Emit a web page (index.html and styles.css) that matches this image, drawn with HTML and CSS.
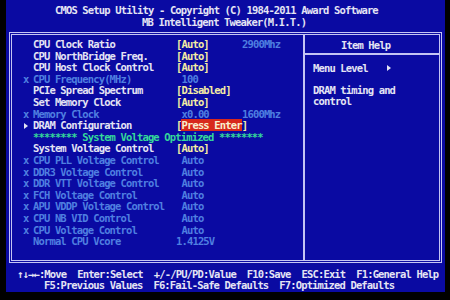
FILE: index.html
```html
<!DOCTYPE html>
<html lang="en">
<head>
    <meta charset="UTF-8">
    <title>CMOS Setup Utility - MB Intelligent Tweaker</title>
    <link rel="stylesheet" href="styles.css">
</head>
<body>
    <div class="screen">
        <header class="title">
            <div class="title-main">CMOS Setup Utility - Copyright (C) 1984-2011 Award Software</div>
            <div class="title-sub">MB Intelligent Tweaker(M.I.T.)</div>
        </header>

        <div class="frame">
            <!-- Settings list -->
            <div class="settings">
                <div class="row"><span class="mark"></span><span class="label">CPU Clock Ratio</span><span class="value">[Auto]</span><span class="extra">2900Mhz</span></div>
                <div class="row"><span class="mark"></span><span class="label">CPU NorthBridge Freq.</span><span class="value">[Auto]</span></div>
                <div class="row"><span class="mark"></span><span class="label">CPU Host Clock Control</span><span class="value">[Auto]</span></div>
                <div class="row off"><span class="mark">x</span><span class="label">CPU Frequency(MHz)</span><span class="value"> 100</span></div>
                <div class="row"><span class="mark"></span><span class="label">PCIe Spread Spectrum</span><span class="value">[Disabled]</span></div>
                <div class="row"><span class="mark"></span><span class="label">Set Memory Clock</span><span class="value">[Auto]</span></div>
                <div class="row off"><span class="mark">x</span><span class="label">Memory Clock</span><span class="value"> x0.00</span><span class="extra">1600Mhz</span></div>
                <div class="row"><span class="mark"><span class="tri"></span></span><span class="label">DRAM Configuration</span><span class="value">[<span class="selected">Press Enter</span>]</span></div>
                <div class="row section"><span class="mark"></span><span class="label">******** System Voltage Optimized ********</span></div>
                <div class="row"><span class="mark"></span><span class="label">System Voltage Control</span><span class="value">[Auto]</span></div>
                <div class="row off"><span class="mark">x</span><span class="label">CPU PLL Voltage Control</span><span class="value"> Auto</span></div>
                <div class="row off"><span class="mark">x</span><span class="label">DDR3 Voltage Control</span><span class="value"> Auto</span></div>
                <div class="row off"><span class="mark">x</span><span class="label">DDR VTT Voltage Control</span><span class="value"> Auto</span></div>
                <div class="row off"><span class="mark">x</span><span class="label">FCH Voltage Control</span><span class="value"> Auto</span></div>
                <div class="row off"><span class="mark">x</span><span class="label">APU VDDP Voltage Control</span><span class="value"> Auto</span></div>
                <div class="row off"><span class="mark">x</span><span class="label">CPU NB VID Control</span><span class="value"> Auto</span></div>
                <div class="row off"><span class="mark">x</span><span class="label">CPU Voltage Control</span><span class="value"> Auto</span></div>
                <div class="row off"><span class="mark"></span><span class="label">Normal CPU Vcore</span><span class="value">1.4125V</span></div>
            </div>

            <!-- Help panel -->
            <div class="help">
                <div class="help-title">Item Help</div>
                <div class="help-body">
                    <div class="help-level">Menu Level  <span class="tri"></span></div>
                    <div class="help-text">DRAM timing and<br>control</div>
                </div>
            </div>
        </div>

        <footer class="keys">
            <div class="keys-main">&uarr;&darr;&rarr;&larr;:Move  Enter:Select  +/-/PU/PD:Value  F10:Save  ESC:Exit  F1:General Help</div>
            <div class="keys-sub">F5:Previous Values  F6:Fail-Safe Defaults  F7:Optimized Defaults</div>
        </footer>
    </div>
</body>
</html>
```

FILE: styles.css
```css
body {
    margin: 0;
    padding: 0;
    background-color: #000;
    font-family: "DejaVu Sans Mono", "Liberation Mono", monospace;
    font-weight: bold;
    font-size: 10.5px;
    letter-spacing: -0.85px;
    color: #e4e4f4;
    width: 450px;
    height: 300px;
    overflow: hidden;
}

.screen {
    margin-left: 6px;
    width: 439px;
    height: 292px;
    background-color: #0a0aa2;
    display: flex;
    flex-direction: column;
}

.title {
    padding-top: 4px;
    height: 28px;
    flex-shrink: 0;
}

.title-main {
    line-height: 12px;
    padding-left: 49px;
    white-space: pre;
}

.title-sub {
    line-height: 12px;
    padding-left: 136px;
    white-space: pre;
}

.frame {
    margin-left: 3px;
    width: 427px;
    height: 225px;
    flex-shrink: 0;
    border: 3px double #c4c4f4;
    display: flex;
}

.settings {
    width: 291px;
    padding-top: 4px;
    border-right: 2px solid #c4c4f4;
}

.row {
    display: flex;
    height: 11.6px;
    line-height: 11.6px;
    white-space: pre;
}

.mark {
    width: 10px;
    padding-left: 11px;
    display: flex;
    align-items: center;
}

.tri {
    display: inline-block;
    width: 0;
    height: 0;
    border-top: 3px solid transparent;
    border-bottom: 3px solid transparent;
    border-left: 4px solid #e4e4f4;
    margin-left: 1px;
}

.label {
    width: 143px;
}

.value {
    width: 66px;
    color: #f4eca4;
}

.extra {
    color: #4f7fe0;
}

.off,
.off .value {
    color: #4f7fe0;
}

.section .label {
    color: #34d89a;
    width: auto;
}

.selected {
    background-color: #d8281c;
    color: #f8f0d0;
}

.help {
    flex: 1;
    display: flex;
    flex-direction: column;
}

.help-title {
    height: 14px;
    line-height: 12px;
    padding-top: 4px;
    padding-left: 36px;
    border-bottom: 2px solid #c4c4f4;
}

.help-body {
    padding-left: 8px;
    padding-top: 8px;
}

.help-level {
    line-height: 11px;
    white-space: pre;
}

.help-level .tri {
    margin-left: 8px;
    vertical-align: 1px;
}

.help-text {
    margin-top: 11px;
    line-height: 11px;
}

.keys {
    padding-top: 6px;
    line-height: 11px;
}

.keys-main {
    padding-left: 11px;
    white-space: pre;
}

.keys-sub {
    padding-left: 38px;
    white-space: pre;
}
```
